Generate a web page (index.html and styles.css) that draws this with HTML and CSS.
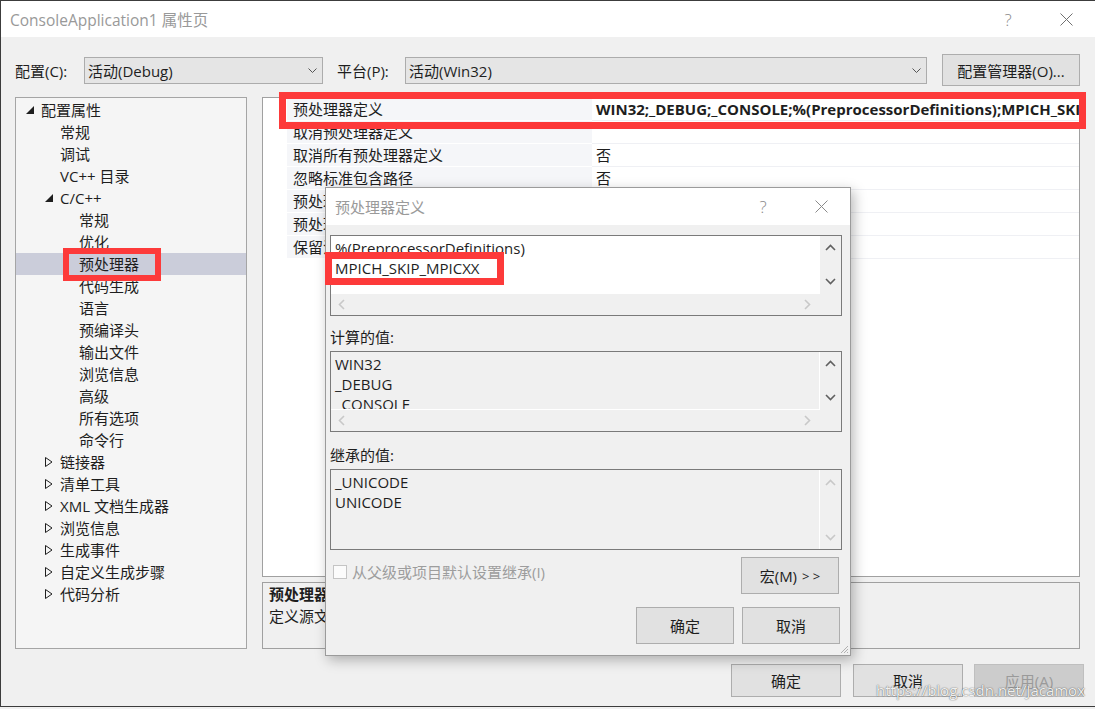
FILE: index.html
```html
<!DOCTYPE html>
<html lang="zh-CN">

<head>
  <meta charset="UTF-8">
  <meta name="viewport" content="width=device-width, initial-scale=1.0">
  <link rel="stylesheet" href="styles.css">
  <title>ConsoleApplication1 属性页</title>
</head>

<body>
  <div class="window">
    <div class="titleBar">
      <span class="title">ConsoleApplication1 属性页</span>
      <span class="capBtn helpBtn">?</span>
      <span class="capBtn closeBtn">
        <svg width="13" height="13" viewBox="0 0 13 13"><path d="M0.5 0.5L12.5 12.5M12.5 0.5L0.5 12.5" stroke="#707070" stroke-width="1" fill="none"/></svg>
      </span>
    </div>

    <div class="configBar">
      <span class="configLabel">配置(C):</span>
      <div class="combo comboConfig">
        <span>活动(Debug)</span>
        <svg class="comboArrow" width="9" height="5" viewBox="0 0 9 5"><path d="M0.5 0.5L4.5 4.5L8.5 0.5" stroke="#555" fill="none"/></svg>
      </div>
      <span class="configLabel platformLabel">平台(P):</span>
      <div class="combo comboPlatform">
        <span>活动(Win32)</span>
        <svg class="comboArrow" width="9" height="5" viewBox="0 0 9 5"><path d="M0.5 0.5L4.5 4.5L8.5 0.5" stroke="#555" fill="none"/></svg>
      </div>
      <div class="btn managerBtn">配置管理器(O)...</div>
    </div>

    <div class="main">
      <ul class="tree">
        <li class="lv0"><span class="twist"><svg width="8" height="8" viewBox="0 0 8 8"><polygon points="8,0 8,8 0,8" fill="#1e1e1e"/></svg></span>配置属性</li>
        <li class="lv1"><span class="twist"></span>常规</li>
        <li class="lv1"><span class="twist"></span>调试</li>
        <li class="lv1"><span class="twist"></span>VC++ 目录</li>
        <li class="lv1"><span class="twist"><svg width="8" height="8" viewBox="0 0 8 8"><polygon points="8,0 8,8 0,8" fill="#1e1e1e"/></svg></span>C/C++</li>
        <li class="lv2"><span class="twist"></span>常规</li>
        <li class="lv2"><span class="twist"></span>优化</li>
        <li class="lv2 selected"><span class="twist"></span>预处理器</li>
        <li class="lv2"><span class="twist"></span>代码生成</li>
        <li class="lv2"><span class="twist"></span>语言</li>
        <li class="lv2"><span class="twist"></span>预编译头</li>
        <li class="lv2"><span class="twist"></span>输出文件</li>
        <li class="lv2"><span class="twist"></span>浏览信息</li>
        <li class="lv2"><span class="twist"></span>高级</li>
        <li class="lv2"><span class="twist"></span>所有选项</li>
        <li class="lv2"><span class="twist"></span>命令行</li>
        <li class="lv1"><span class="twist"><svg width="8" height="10" viewBox="0 0 8 10"><polygon points="0.5,0.5 7,5 0.5,9.5" fill="none" stroke="#1e1e1e"/></svg></span>链接器</li>
        <li class="lv1"><span class="twist"><svg width="8" height="10" viewBox="0 0 8 10"><polygon points="0.5,0.5 7,5 0.5,9.5" fill="none" stroke="#1e1e1e"/></svg></span>清单工具</li>
        <li class="lv1"><span class="twist"><svg width="8" height="10" viewBox="0 0 8 10"><polygon points="0.5,0.5 7,5 0.5,9.5" fill="none" stroke="#1e1e1e"/></svg></span>XML 文档生成器</li>
        <li class="lv1"><span class="twist"><svg width="8" height="10" viewBox="0 0 8 10"><polygon points="0.5,0.5 7,5 0.5,9.5" fill="none" stroke="#1e1e1e"/></svg></span>浏览信息</li>
        <li class="lv1"><span class="twist"><svg width="8" height="10" viewBox="0 0 8 10"><polygon points="0.5,0.5 7,5 0.5,9.5" fill="none" stroke="#1e1e1e"/></svg></span>生成事件</li>
        <li class="lv1"><span class="twist"><svg width="8" height="10" viewBox="0 0 8 10"><polygon points="0.5,0.5 7,5 0.5,9.5" fill="none" stroke="#1e1e1e"/></svg></span>自定义生成步骤</li>
        <li class="lv1"><span class="twist"><svg width="8" height="10" viewBox="0 0 8 10"><polygon points="0.5,0.5 7,5 0.5,9.5" fill="none" stroke="#1e1e1e"/></svg></span>代码分析</li>
      </ul>

      <div class="rightPane">
        <div class="grid">
          <div class="row">
            <div class="gutter"></div>
            <div class="name">预处理器定义</div>
            <div class="value bold">WIN32;_DEBUG;_CONSOLE;%(PreprocessorDefinitions);MPICH_SKIP_MPICXX</div>
          </div>
          <div class="row">
            <div class="gutter"></div>
            <div class="name">取消预处理器定义</div>
            <div class="value"></div>
          </div>
          <div class="row">
            <div class="gutter"></div>
            <div class="name">取消所有预处理器定义</div>
            <div class="value">否</div>
          </div>
          <div class="row">
            <div class="gutter"></div>
            <div class="name">忽略标准包含路径</div>
            <div class="value">否</div>
          </div>
          <div class="row">
            <div class="gutter"></div>
            <div class="name">预处理到文件</div>
            <div class="value">否</div>
          </div>
          <div class="row">
            <div class="gutter"></div>
            <div class="name">预处理取消显示行号</div>
            <div class="value">否</div>
          </div>
          <div class="row">
            <div class="gutter"></div>
            <div class="name">保留注释</div>
            <div class="value">否</div>
          </div>
        </div>
        <div class="desc">
          <p class="descTitle">预处理器定义</p>
          <p>定义源文件的预处理符号。</p>
        </div>
      </div>
    </div>

    <div class="footer">
      <div class="btn footBtn">确定</div>
      <div class="btn footBtn">取消</div>
      <div class="btn footBtn disabled">应用(A)</div>
    </div>

    <!-- 弹出的编辑对话框 -->
    <div class="dialog">
      <div class="dlgTitleBar">
        <span class="dlgTitle">预处理器定义</span>
        <span class="capBtn dlgHelp">?</span>
        <span class="capBtn dlgClose">
          <svg width="13" height="13" viewBox="0 0 13 13"><path d="M0.5 0.5L12.5 12.5M12.5 0.5L0.5 12.5" stroke="#8a8a8a" stroke-width="1" fill="none"/></svg>
        </span>
      </div>
      <div class="dlgBody">
        <div class="editBox editable">
          <div class="editText">
            <p>%(PreprocessorDefinitions)</p>
            <p>MPICH_SKIP_MPICXX</p>
          </div>
          <div class="vScroll">
            <svg width="11" height="7" viewBox="0 0 11 7"><path d="M1 6L5.5 1.5L10 6" stroke="#606060" stroke-width="1.6" fill="none"/></svg>
            <svg width="11" height="7" viewBox="0 0 11 7"><path d="M1 1L5.5 5.5L10 1" stroke="#606060" stroke-width="1.6" fill="none"/></svg>
          </div>
          <div class="hScroll">
            <svg width="7" height="11" viewBox="0 0 7 11"><path d="M6 1L1.5 5.5L6 10" stroke="#c8c8c8" stroke-width="1.6" fill="none"/></svg>
            <svg width="7" height="11" viewBox="0 0 7 11"><path d="M1 1L5.5 5.5L1 10" stroke="#c8c8c8" stroke-width="1.6" fill="none"/></svg>
          </div>
          <div class="corner"></div>
        </div>

        <p class="fieldLabel">计算的值:</p>
        <div class="editBox readonly">
          <div class="editText">
            <p>WIN32</p>
            <p>_DEBUG</p>
            <p>_CONSOLE</p>
          </div>
          <div class="vScroll">
            <svg width="11" height="7" viewBox="0 0 11 7"><path d="M1 6L5.5 1.5L10 6" stroke="#606060" stroke-width="1.6" fill="none"/></svg>
            <svg width="11" height="7" viewBox="0 0 11 7"><path d="M1 1L5.5 5.5L10 1" stroke="#606060" stroke-width="1.6" fill="none"/></svg>
          </div>
          <div class="hScroll">
            <svg width="7" height="11" viewBox="0 0 7 11"><path d="M6 1L1.5 5.5L6 10" stroke="#c8c8c8" stroke-width="1.6" fill="none"/></svg>
            <svg width="7" height="11" viewBox="0 0 7 11"><path d="M1 1L5.5 5.5L1 10" stroke="#c8c8c8" stroke-width="1.6" fill="none"/></svg>
          </div>
          <div class="corner"></div>
        </div>

        <p class="fieldLabel">继承的值:</p>
        <div class="editBox readonly noHScroll">
          <div class="editText">
            <p>_UNICODE</p>
            <p>UNICODE</p>
          </div>
          <div class="vScroll vScrollTall">
            <svg width="11" height="7" viewBox="0 0 11 7"><path d="M1 6L5.5 1.5L10 6" stroke="#c8c8c8" stroke-width="1.6" fill="none"/></svg>
            <svg width="11" height="7" viewBox="0 0 11 7"><path d="M1 1L5.5 5.5L10 1" stroke="#c8c8c8" stroke-width="1.6" fill="none"/></svg>
          </div>
        </div>

        <div class="inheritRow">
          <div class="checkLine">
            <span class="checkBox"></span>
            <span class="checkText">从父级或项目默认设置继承(I)</span>
          </div>
          <div class="btn dlgBtn">宏(M) <span class="arrows">&gt; &gt;</span></div>
        </div>

        <div class="dlgFooter">
          <div class="btn dlgBtn">确定</div>
          <div class="btn dlgBtn">取消</div>
        </div>
      </div>
      <svg class="grip" width="9" height="9" viewBox="0 0 9 9"><path d="M8 1L1 8M8 4L4 8M8 7L7 8" stroke="#b0b0b0" fill="none"/></svg>
    </div>

    <!-- 红框标注 -->
    <div class="mark markTree"></div>
    <div class="mark markRow"></div>
    <div class="mark markDialog"></div>

    <div class="watermark">https://blog.csdn.net/Jacamox</div>
  </div>
</body>

</html>
```

FILE: styles.css
```css
* {
  margin: 0;
  padding: 0;
  box-sizing: border-box;
  list-style: none;
}

body {
  width: 1095px;
  height: 709px;
  overflow: hidden;
  background-color: #f0f0f0;
  font-family: "Open Sans", "Noto Sans CJK SC", sans-serif;
  font-size: 15px;
  color: #1e1e1e;
}

.window {
  position: relative;
  width: 1095px;
  height: 707px;
  border: 1px solid #3c3c3c;
  border-right: none;
  background-color: #f0f0f0;
  display: flex;
  flex-direction: column;
}

/* 标题栏 */
.titleBar {
  height: 36px;
  background-color: #fff;
  display: flex;
  align-items: center;
  padding-left: 9px;
}

.titleBar .title {
  color: #999;
  font-size: 15.5px;
}

.capBtn {
  display: flex;
  align-items: center;
  justify-content: center;
  color: #8a8a8a;
  font-size: 17px;
  font-weight: 300;
}

.helpBtn {
  margin-left: auto;
  width: 46px;
}

.closeBtn {
  width: 46px;
  margin-left: 12px;
  margin-right: 6px;
}

/* 配置栏 */
.configBar {
  height: 60px;
  display: flex;
  align-items: center;
  padding: 6px 14px 0 14px;
}

.configLabel {
  width: 69px;
}

.platformLabel {
  width: 68px;
  margin-left: 14px;
}

.combo {
  height: 27px;
  background-color: #e5e5e5;
  border: 1px solid #acacac;
  display: flex;
  align-items: center;
  justify-content: space-between;
  padding: 0 5px 0 3px;
}

.comboConfig {
  width: 239px;
}

.comboPlatform {
  width: 522px;
}

.btn {
  background-color: #e1e1e1;
  border: 1px solid #adadad;
  display: flex;
  align-items: center;
  justify-content: center;
  color: #1e1e1e;
}

.managerBtn {
  width: 138px;
  height: 32px;
  margin-left: 15px;
}

/* 主体 */
.main {
  height: 552px;
  display: flex;
  gap: 15px;
  padding: 0 14px;
}

.tree {
  width: 232px;
  background-color: #f5f5f5;
  border: 1px solid #a5a5a5;
  padding-top: 1px;
}

.tree li {
  height: 22px;
  line-height: 22px;
  display: flex;
  align-items: center;
  white-space: nowrap;
}

.tree .twist {
  width: 15px;
  height: 22px;
  display: flex;
  align-items: center;
  flex-shrink: 0;
}

.tree .lv0 {
  padding-left: 10px;
}

.tree .lv1 {
  padding-left: 29px;
}

.tree .lv2 {
  padding-left: 48px;
}

.tree .selected {
  background-color: #cbcdda;
}

.rightPane {
  width: 818px;
  display: flex;
  flex-direction: column;
  gap: 5px;
}

.grid {
  height: 480px;
  background-color: #fff;
  border: 1px solid #a0a0a0;
}

.grid .row {
  height: 23px;
  display: flex;
}

.grid .gutter {
  width: 24px;
  flex-shrink: 0;
}

.grid .name {
  width: 305px;
  flex-shrink: 0;
  padding-left: 6px;
  line-height: 22px;
  background-color: #f5f6f9;
  border-bottom: 1px solid #fff;
  white-space: nowrap;
}

.grid .value {
  flex: 1;
  padding-left: 4px;
  line-height: 22px;
  border-bottom: 1px solid #eff0f4;
  white-space: nowrap;
  overflow: hidden;
}

.grid .bold {
  font-weight: 700;
}

.desc {
  height: 67px;
  border: 1px solid #a0a0a0;
  padding-left: 6px;
  line-height: 22px;
}

.desc .descTitle {
  font-weight: 700;
}

/* 底部按钮 */
.footer {
  display: flex;
  justify-content: flex-end;
  padding: 15px 11px 0 0;
}

.footBtn {
  width: 110px;
  height: 33px;
  margin-left: 12px;
}

.footBtn.disabled {
  margin-left: 11px;
  background-color: #cccccc;
  border-color: #bfbfbf;
  color: #9a9a9a;
}

/* 对话框 */
.dialog {
  position: absolute;
  left: 324px;
  top: 186px;
  width: 526px;
  height: 469px;
  background-color: #f0f0f0;
  border: 1px solid #9b9b9b;
  box-shadow: 3px 4px 12px rgba(0, 0, 0, 0.28);
  z-index: 2;
}

.dlgTitleBar {
  height: 37px;
  background-color: #fff;
  display: flex;
  align-items: center;
  padding-left: 9px;
}

.dlgTitle {
  color: #9a9a9a;
}

.dlgHelp {
  margin-left: auto;
  width: 40px;
}

.dlgClose {
  width: 40px;
  margin-left: 18px;
  margin-right: 9px;
}

.dlgBody {
  padding: 10px 8px 0 4px;
}

.editBox {
  height: 81px;
  border: 1px solid #7a7a7a;
  display: grid;
  grid-template-columns: 1fr 21px;
  grid-template-rows: 1fr 21px;
}

.editBox.noHScroll {
  grid-template-rows: 1fr;
}

.editText {
  padding: 2px 4px 0;
  line-height: 20px;
  overflow: hidden;
  white-space: nowrap;
}

.editable .editText {
  background-color: #fff;
}

.readonly .editText {
  border-right: 1px solid #fff;
  border-bottom: 1px solid #fff;
}

.noHScroll .editText {
  border-bottom: none;
}

.vScroll {
  display: flex;
  flex-direction: column;
  justify-content: space-between;
  align-items: center;
  padding: 8px 0 9px;
}

.vScrollTall {
  padding: 9px 0 8px;
}

.hScroll {
  display: flex;
  justify-content: space-between;
  align-items: center;
  padding: 0 9px 0 7px;
}

.fieldLabel {
  line-height: 22px;
  margin: 10px 0 3px;
}

.fieldLabel + .editBox + .fieldLabel {
  margin-top: 12px;
}

.inheritRow {
  display: flex;
  justify-content: space-between;
  align-items: flex-start;
  margin-top: 7px;
  padding-right: 3px;
}

.checkLine {
  display: flex;
  align-items: center;
  margin-top: 4px;
  margin-left: 3px;
  line-height: 22px;
}

.checkBox {
  width: 14px;
  height: 14px;
  border: 1px solid #c4c4c4;
  background-color: #fbfbfb;
  margin-right: 5px;
}

.checkText {
  color: #9d9d9d;
}

.dlgBtn {
  width: 98px;
  height: 37px;
}

.dlgBtn .arrows {
  font-size: 13px;
  margin-left: 5px;
}

.dlgFooter {
  display: flex;
  justify-content: flex-end;
  gap: 8px;
  margin-top: 13px;
  padding-right: 2px;
}

.grip {
  position: absolute;
  right: 1px;
  bottom: 1px;
}

/* 标注红框 */
.mark {
  position: absolute;
  border: 7px solid #fd3a3a;
  z-index: 3;
}

.markTree {
  left: 62px;
  top: 247px;
  width: 98px;
  height: 33px;
  border-width: 6px;
}

.markRow {
  left: 278px;
  top: 91px;
  width: 807px;
  height: 37px;
}

.markDialog {
  left: 324px;
  top: 251px;
  width: 179px;
  height: 33px;
}

.watermark {
  position: absolute;
  left: 875px;
  top: 679px;
  font-size: 15px;
  color: rgba(255, 255, 255, 0.92);
  text-shadow: 0 0 1px rgba(0, 0, 0, 0.6), 0 0 2px rgba(0, 0, 0, 0.25);
  z-index: 4;
}
```
